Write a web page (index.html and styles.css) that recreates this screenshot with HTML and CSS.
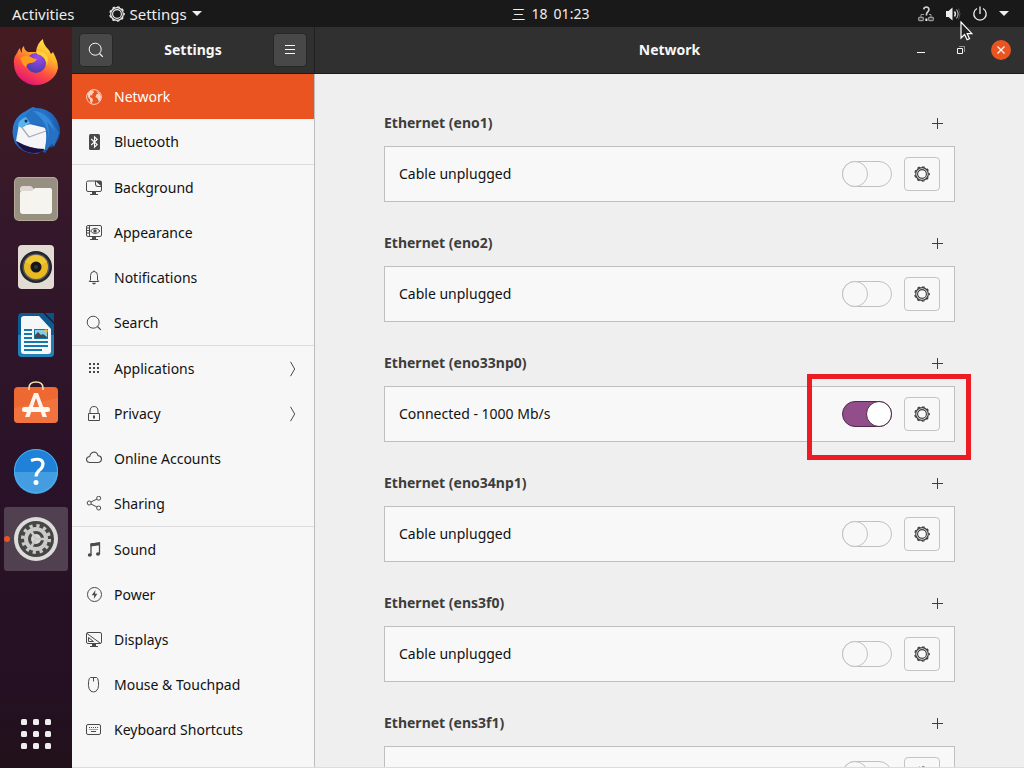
FILE: index.html
```html
<!DOCTYPE html>
<html lang="en">
<head>
<meta charset="utf-8">
<title>Network Settings</title>
<link rel="stylesheet" href="styles.css">
</head>
<body>
<svg class="defs" aria-hidden="true">
  <symbol id="gear" viewBox="0 0 16 16">
    <circle cx="8" cy="8" r="6.300" fill="none" stroke="currentColor" stroke-width="1.200"/>
    <circle cx="8" cy="8" r="4.400" fill="none" stroke="currentColor" stroke-width="1.100"/>
    <circle cx="8" cy="8" r="7.200" fill="none" stroke="currentColor" stroke-width="1.200" stroke-dasharray="2.600 2.426" stroke-dashoffset="1.300"/>
  </symbol>
  <symbol id="search" viewBox="0 0 16 16">
    <circle cx="7.2" cy="7.2" r="6" fill="none" stroke="currentColor"/>
    <path d="M11.5 11.5l3.3 3.3" stroke="currentColor" stroke-width="1.2"/>
  </symbol>
  <symbol id="plus" viewBox="0 0 16 16"><path d="M3 8.500h11M8.500 3v11" stroke="currentColor" stroke-width="1"/></symbol>
  <symbol id="chevron" viewBox="0 0 16 16"><path d="M6.500 .8L10.700 8 6.500 15.200" fill="none" stroke="currentColor"/></symbol>
  <symbol id="caret" viewBox="0 0 10 5"><path d="M0 0h10L5 5z" fill="currentColor"/></symbol>
</svg>

<header class="topbar">
  <div class="topbar-left">
    <button class="bar-button">Activities</button>
    <button class="bar-button app-menu"><svg class="icon"><use href="#gear"/></svg>Settings<svg class="caret"><use href="#caret"/></svg></button>
  </div>
  <button class="bar-button clock"><span>三</span><span>18</span><span>01:23</span></button>
  <div class="topbar-right">
    <button class="bar-button tray" aria-label="System menu">
      <svg class="icon" viewBox="0 0 16 16" fill="none" stroke="currentColor">
        <g opacity=".6"><path d="M3 11V8.500h3M13 11V8.500h-2"/><rect x=".7" y="11.500" width="4.600" height="3" rx=".8" stroke-width="1.300"/><rect x="10.700" y="11.500" width="4.600" height="3" rx=".8" stroke-width="1.300"/></g>
        <path d="M5.700 3.300Q6 1 8.400 1q2.500.1 2.500 2.500 0 1.500-1.300 2.500T8.400 9.500" stroke-width="1.700" opacity=".85"/><path d="M8.400 12.500v2.500" stroke-width="2"/>
      </svg>
      <svg class="icon" viewBox="0 0 16 16" fill="none" stroke="currentColor">
        <path d="M1 5h2.500L7.500 1.500v13L3.500 11H1z" fill="currentColor" stroke="none"/>
        <path d="M9.500 5.500q1.800 2.500 0 5" stroke-width="1.400"/><path d="M11.500 3.500q3.200 4.500 0 9" opacity=".85"/><path d="M13.500 2.500q3 5.500 0 11" opacity=".25"/>
      </svg>
      <svg class="icon" viewBox="0 0 16 16" fill="none" stroke="currentColor" stroke-width="1.300">
        <path d="M5 2.500a6.200 6.200 0 1 0 6 0M8 .5v7.500"/>
      </svg>
      <svg class="caret"><use href="#caret"/></svg>
      <svg class="cursor" viewBox="0 0 13 20"><path d="M1 1v16l3.600-3.400 2.500 5.200 2.400-1-2.300-5.100H12z" fill="#222" stroke="#fff" stroke-width="1.200"/></svg>
    </button>
  </div>
</header>

<div class="desktop">
  <nav class="dock" aria-label="Dock">
    <button class="tile" aria-label="Firefox">
      <svg viewBox="0 0 48 48">
        <defs>
          <linearGradient id="ffx" x1=".8" y1="0" x2=".3" y2="1"><stop offset="0" stop-color="#fff44f"/><stop offset=".35" stop-color="#ffb02a"/><stop offset=".65" stop-color="#ff4f3e"/><stop offset="1" stop-color="#e3107a"/></linearGradient>
          <radialGradient id="ffp" cx=".6" cy=".2" r=".8"><stop offset="0" stop-color="#a14be8"/><stop offset="1" stop-color="#4a3bb0"/></radialGradient>
        </defs>
        <path d="M5 14Q6 11 8 9q0 3 2 5Q9 9 12 7q0 4 4 6h8q1-9 7-13 0 5 5 10 2 2 3 5l2-2q5 9 5 16A22 21 0 0 1 24 46 22 21 0 0 1 2 25Q1 19 5 14z" fill="url(#ffx)"/>
        <circle cx="24" cy="24" r="10" fill="url(#ffp)"/>
        <path d="M8 19q5-4 11-1 2 2 6 2-2 4-7 4-4 1-4 5-4-4-6-10z" fill="#ff9a1f"/>
        <path d="M25 12q8 0 11 7l-1 8Q34 17 25 15z" fill="#ffd13a"/>
      </svg>
    </button>
    <button class="tile" aria-label="Thunderbird">
      <svg viewBox="0 0 48 48">
        <defs><linearGradient id="tb" x1="0" y1="0" x2="1" y2="1"><stop offset="0" stop-color="#2b8ddc"/><stop offset=".5" stop-color="#2168bd"/><stop offset="1" stop-color="#164a92"/></linearGradient></defs>
        <path d="M17 2l4-2 3 1q11 0 18 8 6 7 6 16-1 10-9 16l-1-2-5 7-3-2-5 3Q10 47 3 36-2 24 3 14 7 7 14 4z" fill="url(#tb)"/>
        <path d="M7 17l6-1 21 5 1 10-2 12Q19 42 4 34z" fill="#f5f5f7"/>
        <path d="M8 18l9 12 17-6" fill="none" stroke="#a9acb4" stroke-width="1.300"/>
        <path d="M11 16Q14 3 24 1q14 3 17 15l6 10-5 14-2-4-5 7-2-1Q36 25 32 19q-8-4-17-1z" fill="#2671c4"/>
        <path d="M21 4q15 0 22 20l-8-9q3 8 1 17 2-15-15-28z" fill="#3c9ae6" opacity=".65"/>
        <path d="M4 34q13 8 29 8-4 4-12 4Q9 45 4 34z" fill="#20103e"/>
        <path d="M6 19q0-6 8-9l4 6-8 5z" fill="#5cb3ea"/><circle cx="14" cy="14" r="1.500" fill="#173260"/>
      </svg>
    </button>
    <button class="tile" aria-label="Files">
      <svg viewBox="0 0 48 48">
        <rect x="2" y="2" width="44" height="44" rx="5" fill="#b5ad99"/><rect x="3" y="3" width="42" height="42" rx="4" fill="#979081"/>
        <path d="M8 14q0-3 3-3h7q2 0 3 2l2 3H8z" fill="#dfd7d1"/><path d="M8 18q0-2 2-2h10l3-3h15q2 0 2 2v21q0 3-3 3H11q-3 0-3-3z" fill="#f6f4ef"/>
      </svg>
    </button>
    <button class="tile" aria-label="Rhythmbox">
      <svg viewBox="0 0 48 48">
        <rect x="6" y="2" width="36" height="44" rx="4" fill="#e2dcd5"/><circle cx="24" cy="24" r="16" fill="#24262c"/><circle cx="24" cy="24" r="13.500" fill="#555861"/><circle cx="24" cy="24" r="12" fill="#e9b91f"/><path d="M13 19a12 12 0 0 1 22 0L24 24z" fill="#f7d54a" opacity=".5"/><circle cx="24" cy="24" r="5.500" fill="#15171b"/><circle cx="24" cy="24" r="2" fill="#34363b"/>
      </svg>
    </button>
    <button class="tile" aria-label="LibreOffice Writer">
      <svg viewBox="0 0 48 48">
        <path d="M10 2h21l11 11v29q0 4-4 4H10q-4 0-4-4V6q0-4 4-4z" fill="#0a5c93"/><path d="M6 24h36v18q0 4-4 4H10q-4 0-4-4z" fill="#237fb5"/><path d="M33 2h9v9z" fill="#095385"/>
        <path d="M12 5h15l12 13v22q0 3-3 3H12q-3 0-3-3V8q0-3 3-3z" fill="#f5f7f9"/>
        <path d="M12 19h8M12 23h8M12 27h8M12 31h24M12 35h24M12 39h18" stroke="#1478ae" stroke-width="2"/>
        <rect x="22" y="18" width="14" height="10" fill="#1a73a8"/><rect x="23" y="19" width="12" height="8" fill="#86ccf0"/><path d="M23 27v-3l3-3 3 3 2-1 4 3v1z" fill="#45494b"/><circle cx="34" cy="20" r="1.800" fill="#f4c21c"/>
      </svg>
    </button>
    <button class="tile" aria-label="Ubuntu Software">
      <svg viewBox="0 0 48 48">
        <rect x="2" y="8" width="44" height="36" rx="4" fill="#ee6831"/><path d="M2 29L46 19v21q0 4-4 4H6q-4 0-4-4z" fill="#f58353" opacity=".45"/>
        <path d="M17 11V9q0-6 7-6t7 6v2" fill="none" stroke="#f4dfae" stroke-width="1.600"/>
        <path d="M22 14h4l9 24h-4.500L24 19l-6.500 19H13z" fill="#fff5ee"/><rect x="10" y="28" width="28" height="5" rx="2.500" fill="#fffaf5"/>
      </svg>
    </button>
    <button class="tile" aria-label="Help">
      <svg viewBox="0 0 48 48">
        <circle cx="24" cy="24" r="22" fill="#1f82d8"/><path d="M2 25h44a22 22 0 0 1-44 0z" fill="#449de0"/><circle cx="24" cy="24" r="21.500" fill="none" stroke="#48b1ee"/>
        <path d="M19 13.500q11-3.500 12 3 0 4-4 7-3 3-3 6" fill="none" stroke="#fff" stroke-width="3.200"/><circle cx="24" cy="35.500" r="2.500" fill="#fff"/>
      </svg>
    </button>
    <button class="tile tile-active" aria-label="Settings">
      <svg viewBox="0 0 48 48">
        <circle cx="24" cy="24" r="22" fill="#dcdcda"/><circle cx="24" cy="24" r="18" fill="#454645"/>
        <circle cx="24" cy="24" r="13.300" fill="none" stroke="#cacac8" stroke-width="3.500" stroke-dasharray="3.200 3.764"/>
        <circle cx="24" cy="24" r="10" fill="none" stroke="#cacac8" stroke-width="4"/>
        <circle cx="24" cy="24" r="5" fill="#d8d8d6"/><path d="M24 24h9M24 24l-5-8M24 24l-5 8" stroke="#cacac8" stroke-width="2.500"/>
      </svg>
    </button>
    <button class="tile tile-apps" aria-label="Show Applications">
      <svg viewBox="0 0 48 48" fill="#eee">
        <rect x="9" y="9" width="6" height="6" rx="1.500"/><rect x="21" y="9" width="6" height="6" rx="1.500"/><rect x="33" y="9" width="6" height="6" rx="1.500"/>
        <rect x="9" y="21" width="6" height="6" rx="1.500"/><rect x="21" y="21" width="6" height="6" rx="1.500"/><rect x="33" y="21" width="6" height="6" rx="1.500"/>
        <rect x="9" y="33" width="6" height="6" rx="1.500"/><rect x="21" y="33" width="6" height="6" rx="1.500"/><rect x="33" y="33" width="6" height="6" rx="1.500"/>
      </svg>
    </button>
  </nav>

  <div class="window">
    <aside class="sidebar">
      <div class="headerbar">
        <button class="header-button" aria-label="Search"><svg class="icon"><use href="#search"/></svg></button>
        <h1 class="title">Settings</h1>
        <button class="header-button" aria-label="Menu"><svg class="icon" viewBox="0 0 16 16"><path d="M3 3.500h10M3 7.500h10M3 11.500h10" stroke="currentColor"/></svg></button>
      </div>
      <nav class="menu">
        <a class="item item-selected" href="#network"><svg class="icon" viewBox="0 0 16 16"><circle cx="8" cy="8" r="7.400" fill="none" stroke="currentColor"/><path d="M1.500 4.500L4 2l3-.8 1 2-2 2 .5 1.300-2-.5L4 8l2 1 1 2-1.500 4-1.300-2-.2-2.500L2 8zM10 2l3 1.500 2 3.500-.5 4-1.800 1.500-1-3L9.500 8l.8-2.500 2-1z" fill="currentColor"/></svg><span>Network</span></a>
        <a class="item" href="#bluetooth"><svg class="icon" viewBox="0 0 16 16"><rect x="3" y="0" width="11" height="16" rx="1.500" fill="currentColor"/><path d="M5.200 5l6 5.500-2.700 2.700V2.800l2.700 2.700-6 5.500" fill="none" stroke="#fff" stroke-width="1.100"/></svg><span>Bluetooth</span></a>
        <hr class="rule">
        <a class="item" href="#background"><svg class="icon" viewBox="0 0 16 16"><path d="M9.500 1H2Q.5 1 .5 2.500V10q0 1.500 1.500 1.500h12q1.500 0 1.500-1.500V6" fill="none" stroke="currentColor"/><path d="M9 .5h5q2 0 2 2V7h-4Q9 7 9 4z" fill="currentColor"/><path d="M10 1.500L15 6h-3q-2 0-2-2z" fill="#f7f7f7"/><path d="M6 12h4v2h2v1H4v-1h2z" fill="currentColor"/></svg><span>Background</span></a>
        <a class="item" href="#appearance"><svg class="icon" viewBox="0 0 16 16"><rect x=".5" y=".5" width="15" height="11" rx="1.500" fill="none" stroke="currentColor"/><path d="M3.500 1v10.500M1 3h2M1 5.500h2M1 8h2" fill="none" stroke="currentColor"/><path d="M4.500 6Q9 .5 14 6 9 11 4.500 6z" fill="none" stroke="currentColor"/><circle cx="9" cy="6" r="1.700" fill="currentColor"/><path d="M6 12h4v2h2v1H4v-1h2z" fill="currentColor"/></svg><span>Appearance</span></a>
        <a class="item" href="#notifications"><svg class="icon" viewBox="0 0 16 16"><path d="M4.500 10V5.500Q4.500 1.500 8 1.500t3.500 4V10l1.300 1.500H3.200z" fill="none" stroke="currentColor"/><path d="M7.500 .5h1v1h-1zM6 12.800h4q-.5 1.700-2 1.700t-2-1.700z" fill="currentColor"/></svg><span>Notifications</span></a>
        <a class="item" href="#search-settings"><svg class="icon"><use href="#search"/></svg><span>Search</span></a>
        <hr class="rule">
        <a class="item" href="#applications"><svg class="icon" viewBox="0 0 16 16" fill="currentColor"><path d="M3 2h2v2H3zM7 2h2v2H7zM11 2h2v2h-2zM3 6h2v2H3zM7 6h2v2H7zM11 6h2v2h-2zM3 10h2v2H3zM7 10h2v2H7zM11 10h2v2h-2z"/></svg><span>Applications</span><svg class="icon arrow"><use href="#chevron"/></svg></a>
        <a class="item" href="#privacy"><svg class="icon" viewBox="0 0 16 16"><path d="M2.500 7.500h11v7h-11zM4 7V5Q4 .5 8 .5T12 5v2" fill="none" stroke="currentColor"/><path d="M7 9.500h2v3H7z" fill="currentColor"/></svg><span>Privacy</span><svg class="icon arrow"><use href="#chevron"/></svg></a>
        <a class="item" href="#accounts"><svg class="icon" viewBox="0 0 16 16"><path d="M3.500 11.500Q.5 11 .5 8.500t3.200-3Q4.500 1.500 8 1q3 .1 4 3.600 3.500.5 3.500 3.600 0 2.800-3 3.300z" fill="none" stroke="currentColor" stroke-width="1.100"/></svg><span>Online Accounts</span></a>
        <a class="item" href="#sharing"><svg class="icon" viewBox="0 0 16 16" fill="none" stroke="currentColor"><circle cx="3.200" cy="7" r="2"/><circle cx="12.700" cy="2.200" r="2"/><circle cx="12.700" cy="12" r="2"/><path d="M5 6l6-3M5 8l6 3"/></svg><span>Sharing</span></a>
        <hr class="rule">
        <a class="item" href="#sound"><svg class="icon" viewBox="0 0 16 16"><path d="M5 13V2l8.500-1v11" fill="none" stroke="currentColor" stroke-width="1.300"/><path d="M4.500 1.500L14 .3v3L4.500 4.500z" fill="currentColor"/><ellipse cx="3.800" cy="13" rx="2" ry="1.800" fill="currentColor"/><ellipse cx="12" cy="12" rx="2" ry="1.800" fill="currentColor"/></svg><span>Sound</span></a>
        <a class="item" href="#power"><svg class="icon" viewBox="0 0 16 16"><circle cx="8.500" cy="7.500" r="7" fill="none" stroke="currentColor"/><path d="M9.500 3L5.700 8.300h2.500L7.800 12l3.600-5.200H9z" fill="currentColor"/></svg><span>Power</span></a>
        <a class="item" href="#displays"><svg class="icon" viewBox="0 0 16 16"><rect x=".5" y=".5" width="15" height="11" rx="1.500" fill="none" stroke="currentColor"/><path d="M1 1.500l13 9.500M2.500 5.500v4h5z" fill="none" stroke="currentColor"/><path d="M6 12h4v2h2v1H4v-1h2z" fill="currentColor"/></svg><span>Displays</span></a>
        <a class="item" href="#mouse"><svg class="icon" viewBox="0 0 16 16"><path d="M4.500 .5h6q1.500 0 1.900 4 .6 4.500-.5 7.200-1.300 3.300-4.400 3.300t-4.400-3.300Q2 9 2.600 4.500q.4-4 1.900-4zM7.500 1v3.500" fill="none" stroke="currentColor"/></svg><span>Mouse &amp; Touchpad</span></a>
        <a class="item" href="#keyboard"><svg class="icon" viewBox="0 0 16 16"><rect x=".5" y="2.500" width="14" height="10" rx="1.500" fill="none" stroke="currentColor"/><path d="M3 5.500h9.500M3.500 7.500h8.500" stroke="currentColor" stroke-dasharray="1 1"/><path d="M5 9.500h5" stroke="currentColor"/></svg><span>Keyboard Shortcuts</span></a>
        <a class="item" href="#printers" aria-label="Printers"><svg class="icon" viewBox="0 0 16 16"><path d="M3.500 5V-.5h9V5M.5 5.500h15v6H.5z" fill="none" stroke="currentColor"/></svg></a>
      </nav>
    </aside>

    <main class="content">
      <div class="headerbar headerbar-main">
        <h2 class="title">Network</h2>
        <div class="controls">
          <button class="control" aria-label="Minimize"><svg class="icon" viewBox="0 0 16 16"><path d="M4 10.500h8" stroke="currentColor"/></svg></button>
          <button class="control" aria-label="Restore"><svg class="icon" viewBox="0 0 16 16" fill="none" stroke="currentColor"><path d="M4.500 6.500h5v5h-5z"/><path d="M6 4.500h5.500V10" opacity=".5"/></svg></button>
          <button class="control control-close" aria-label="Close"><svg class="icon" viewBox="0 0 16 16"><path d="M4.500 4.500l7 7M11.500 4.500l-7 7" stroke="currentColor" stroke-width="1.300"/></svg></button>
        </div>
      </div>
      <div class="panel">
        <section class="group">
          <div class="group-head"><h3>Ethernet (eno1)</h3><button class="add" aria-label="Add profile for eno1"><svg class="icon"><use href="#plus"/></svg></button></div>
          <div class="card"><label for="eno1">Cable unplugged</label><input class="switch" type="checkbox" role="switch" id="eno1"><button class="options" aria-label="Options for eno1"><svg class="icon"><use href="#gear"/></svg></button></div>
        </section>
        <section class="group">
          <div class="group-head"><h3>Ethernet (eno2)</h3><button class="add" aria-label="Add profile for eno2"><svg class="icon"><use href="#plus"/></svg></button></div>
          <div class="card"><label for="eno2">Cable unplugged</label><input class="switch" type="checkbox" role="switch" id="eno2"><button class="options" aria-label="Options for eno2"><svg class="icon"><use href="#gear"/></svg></button></div>
        </section>
        <section class="group">
          <div class="group-head"><h3>Ethernet (eno33np0)</h3><button class="add" aria-label="Add profile for eno33np0"><svg class="icon"><use href="#plus"/></svg></button></div>
          <div class="card"><label for="eno33np0">Connected - 1000 Mb/s</label><input class="switch" type="checkbox" role="switch" id="eno33np0" checked><button class="options" aria-label="Options for eno33np0"><svg class="icon"><use href="#gear"/></svg></button><div class="callout"></div></div>
        </section>
        <section class="group">
          <div class="group-head"><h3>Ethernet (eno34np1)</h3><button class="add" aria-label="Add profile for eno34np1"><svg class="icon"><use href="#plus"/></svg></button></div>
          <div class="card"><label for="eno34np1">Cable unplugged</label><input class="switch" type="checkbox" role="switch" id="eno34np1"><button class="options" aria-label="Options for eno34np1"><svg class="icon"><use href="#gear"/></svg></button></div>
        </section>
        <section class="group">
          <div class="group-head"><h3>Ethernet (ens3f0)</h3><button class="add" aria-label="Add profile for ens3f0"><svg class="icon"><use href="#plus"/></svg></button></div>
          <div class="card"><label for="ens3f0">Cable unplugged</label><input class="switch" type="checkbox" role="switch" id="ens3f0"><button class="options" aria-label="Options for ens3f0"><svg class="icon"><use href="#gear"/></svg></button></div>
        </section>
        <section class="group">
          <div class="group-head"><h3>Ethernet (ens3f1)</h3><button class="add" aria-label="Add profile for ens3f1"><svg class="icon"><use href="#plus"/></svg></button></div>
          <div class="card"><label for="ens3f1">Cable unplugged</label><input class="switch" type="checkbox" role="switch" id="ens3f1"><button class="options" aria-label="Options for ens3f1"><svg class="icon"><use href="#gear"/></svg></button></div>
        </section>
      </div>
    </main>
  </div>
</div>
</body>
</html>
```
FILE: styles.css
```css
*, *::before { box-sizing: border-box; }

body {
  margin: 0;
  height: 100vh;
  display: flex;
  flex-direction: column;
  overflow: hidden;
  font: 14px/20px "Noto Sans", "Noto Sans CJK SC", sans-serif;
  color: #111;
  background: #22101c;
}

button {
  font: inherit;
  color: inherit;
  border: 0;
  padding: 0;
  background: none;
}

h1, h2, h3 { margin: 0; font-size: 14px; }

.defs { position: absolute; width: 0; height: 0; }
.icon { display: block; width: 16px; height: 16px; flex: none; }
.caret { display: block; width: 10px; height: 5px; flex: none; }

/* Top bar */
.topbar {
  flex: none;
  height: 27px;
  display: grid;
  grid-template-columns: 1fr auto 1fr;
  align-items: center;
  padding: 0 15px 0 12px;
  background: #191919;
  color: #eee;
}
.topbar-left { display: flex; gap: 34px; font-size: 15px; }
.topbar-right { display: flex; justify-content: flex-end; }
.bar-button { white-space: nowrap; }
.app-menu { display: flex; align-items: center; gap: 5px; }
.clock { display: flex; gap: 6px; padding-left: 80px; }
.tray { position: relative; display: flex; align-items: center; gap: 11px; }
.cursor { position: absolute; right: 36px; top: 15px; width: 13px; height: 20px; z-index: 5; }

/* Dock */
.desktop { flex: 1; min-height: 0; display: flex; }
.dock {
  flex: none;
  width: 72px;
  padding: 4px 4px 2px;
  display: flex;
  flex-direction: column;
  gap: 4px;
  background: linear-gradient(#451b20, #34182a 26%, #2a1228 60%, #241022 90%, #22111a);
}
.tile {
  position: relative;
  flex: none;
  height: 64px;
  display: flex;
  align-items: center;
  justify-content: center;
  border-radius: 3px;
}
.tile svg { width: 48px; height: 48px; }
.tile-active { background: #51404f; }
.tile-active::before {
  content: "";
  position: absolute;
  left: 0;
  top: 29px;
  width: 6px;
  height: 6px;
  border-radius: 50%;
  background: #e95420;
}
.tile-apps { margin-top: auto; }

/* Window */
.window {
  flex: 1;
  min-width: 0;
  display: flex;
  border-bottom: 1px solid #dcdcdc;
}
.sidebar {
  flex: none;
  width: 243px;
  display: flex;
  flex-direction: column;
  overflow: hidden;
  background: #f7f7f7;
}
.content {
  flex: 1;
  min-width: 0;
  display: flex;
  flex-direction: column;
  background: #efefef;
}
.headerbar {
  flex: none;
  height: 47px;
  display: flex;
  align-items: center;
  justify-content: space-between;
  padding: 0 7px;
  background: #303030;
  border-bottom: 1px solid #1c1c1c;
  color: #f7f7f7;
}
.sidebar .headerbar { border-right: 1px solid #1f1f1f; }
.header-button {
  width: 34px;
  height: 34px;
  display: grid;
  place-items: center;
  border: 1px solid #272727;
  border-radius: 4px;
  background: #484848;
}
.headerbar-main {
  display: grid;
  grid-template-columns: 1fr auto 1fr;
  padding: 0 13px;
}
.headerbar-main .title { grid-column: 2; }
.controls { display: flex; gap: 20px; justify-content: flex-end; }
.control {
  width: 20px;
  height: 20px;
  display: grid;
  place-items: center;
  border-radius: 50%;
}
.control-close { background: #e95420; }

/* Sidebar list */
.menu { flex: 1; min-height: 0; overflow: hidden; border-right: 1px solid #bebebe; }
.item {
  height: 45px;
  display: flex;
  align-items: center;
  gap: 12px;
  padding: 0 14px;
  color: #111;
  text-decoration: none;
}
.item .icon { color: #4a4a4a; }
.item-selected { background: #e95420; color: #fff; }
.item-selected .icon { color: #fbd0c0; }
.item .arrow { margin-left: auto; }
.rule { height: 1px; margin: 0; border: 0; background: #dcdcdc; }

/* Network panel */
.panel {
  flex: 1;
  min-height: 0;
  overflow: hidden;
  display: flex;
  flex-direction: column;
  gap: 14px;
  padding: 22px 69px 0;
}
.group { flex: none; }
.group-head {
  height: 50px;
  padding-top: 4px;
  display: flex;
  align-items: center;
  justify-content: space-between;
  color: #3d3d3d;
}
.add { width: 36px; height: 34px; display: grid; place-items: center; }
.card {
  position: relative;
  height: 56px;
  display: flex;
  align-items: center;
  gap: 12px;
  padding: 0 14px;
  border: 1px solid #bfbfbf;
  background: #f8f8f8;
}
.card label { flex: 1; }
.switch {
  appearance: none;
  width: 50px;
  height: 26px;
  margin: 0;
  display: flex;
  border: 1px solid #c0c0c0;
  border-radius: 13px;
  background: #f8f8f8;
}
.switch::before {
  content: "";
  width: 26px;
  height: 26px;
  margin: -1px;
  border: 1px solid #c0c0c0;
  border-radius: 50%;
  background: #f8f8f8;
}
.switch:checked {
  justify-content: flex-end;
  border-color: #50294b;
  background: #924d8b;
}
.switch:checked::before { border-color: #50294b; background: #fff; }
.options {
  width: 36px;
  height: 34px;
  display: grid;
  place-items: center;
  border: 1px solid #c4c4c4;
  border-radius: 4px;
  color: #3d3d3d;
}
.callout {
  position: absolute;
  top: -13px;
  right: -17px;
  bottom: -19px;
  width: 164px;
  border: 5px solid #ed1c24;
  pointer-events: none;
}
```
